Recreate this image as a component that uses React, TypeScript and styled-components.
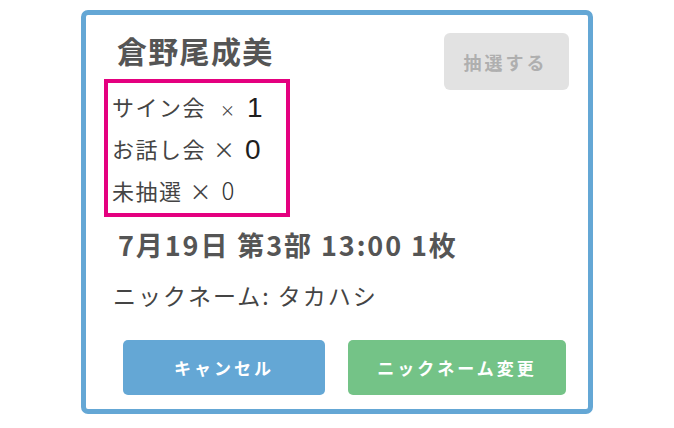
import styled, { createGlobalStyle } from "styled-components";

const GlobalStyle = createGlobalStyle`
    html, body {
        margin: 0;
        padding: 0;
        background: #ffffff;
    }
    body {
        font-family: "Noto Sans CJK JP", "Noto Sans", sans-serif;
        color: #444444;
    }
`;

const StyledPage = styled.div`
    padding: 10px 0 0 81px;
`;

const StyledCard = styled.div`
    box-sizing: border-box;
    width: 512px;
    height: 404px;
    border: 5px solid #64a7d5;
    border-radius: 7px;
    padding: 18px 19px 14px 18px;
    display: flex;
    flex-direction: column;
`;

const StyledTop = styled.div`
    display: flex;
    justify-content: space-between;
    align-items: flex-start;
`;

const StyledLeft = styled.div`
    display: flex;
    flex-direction: column;
    align-items: flex-start;
`;

const StyledName = styled.h2`
    margin: 0 0 12px 13px;
    font-size: 30px;
    line-height: 34px;
    letter-spacing: 1.3px;
    font-weight: bold;
    color: #555555;
`;

const StyledCounts = styled.div`
    box-sizing: border-box;
    width: 186px;
    height: 138px;
    border: 4px solid #e4007f;
    padding: 2px 4px;
`;

const StyledCountRow = styled.div`
    font-size: 22px;
    line-height: 42px;
    height: 42px;
    letter-spacing: 1.5px;
    color: #444444;
    white-space: nowrap;
`;

const StyledTimes = styled.span<{ $small?: boolean }>`
    font-size: ${(p) => (p.$small ? "15px" : "22px")};
    margin: ${(p) => (p.$small ? "0 12px 0 14px" : "0 10px 0 7px")};
    letter-spacing: 0;
`;

const StyledNum = styled.span<{ $big?: boolean }>`
    font-family: ${(p) => (p.$big ? '"Liberation Sans", Arial, sans-serif' : 'inherit')};
    font-size: ${(p) => (p.$big ? "28px" : "24px")};
    font-weight: ${(p) => (p.$big ? 400 : 300)};
    color: ${(p) => (p.$big ? "#1e1e1e" : "#333333")};
    position: relative;
    top: ${(p) => (p.$big ? "1px" : "0")};
`;

const StyledDrawButton = styled.button`
    width: 125px;
    height: 57px;
    border: none;
    border-radius: 6px;
    background: #e2e2e2;
    color: #afafaf;
    font-family: "Noto Sans CJK JP", sans-serif;
    font-size: 18px;
    font-weight: bold;
    letter-spacing: 3px;
    padding-left: 4px;
    cursor: default;
`;

const StyledDate = styled.p`
    margin: 11px 0 0 14px;
    font-size: 27px;
    line-height: 34px;
    letter-spacing: 1.9px;
    font-weight: bold;
    color: #555555;
`;

const StyledNick = styled.p`
    margin: 18px 0 0 9px;
    font-size: 23px;
    line-height: 30px;
    letter-spacing: 2px;
    color: #444444;
`;

const StyledActions = styled.div`
    display: flex;
    gap: 23px;
    margin: 30px 0 0 19px;
`;

const StyledAction = styled.button<{ $color: string; $width: number }>`
    width: ${(p) => p.$width}px;
    height: 55px;
    border: none;
    border-radius: 5px;
    background: ${(p) => p.$color};
    color: #ffffff;
    font-family: "Noto Sans CJK JP", sans-serif;
    font-size: 17px;
    font-weight: bold;
    letter-spacing: 3px;
    padding-left: 6px;
`;

export default function App() {
    return (
        <StyledPage>
            <GlobalStyle/>
            <StyledCard>
                <StyledTop>
                    <StyledLeft>
                        <StyledName>倉野尾成美</StyledName>
                        <StyledCounts>
                            <StyledCountRow>
                                サイン会<StyledTimes $small>×</StyledTimes><StyledNum $big>1</StyledNum>
                            </StyledCountRow>
                            <StyledCountRow>
                                お話し会<StyledTimes>×</StyledTimes><StyledNum $big>0</StyledNum>
                            </StyledCountRow>
                            <StyledCountRow>
                                未抽選<StyledTimes>×</StyledTimes><StyledNum>0</StyledNum>
                            </StyledCountRow>
                        </StyledCounts>
                    </StyledLeft>
                    <StyledDrawButton disabled>抽選する</StyledDrawButton>
                </StyledTop>
                <StyledDate>7月19日 第3部 13:00 1枚</StyledDate>
                <StyledNick>ニックネーム: タカハシ</StyledNick>
                <StyledActions>
                    <StyledAction $color="#64a7d5" $width={202}>キャンセル</StyledAction>
                    <StyledAction $color="#74c387" $width={218}>ニックネーム変更</StyledAction>
                </StyledActions>
            </StyledCard>
        </StyledPage>
    );
}
